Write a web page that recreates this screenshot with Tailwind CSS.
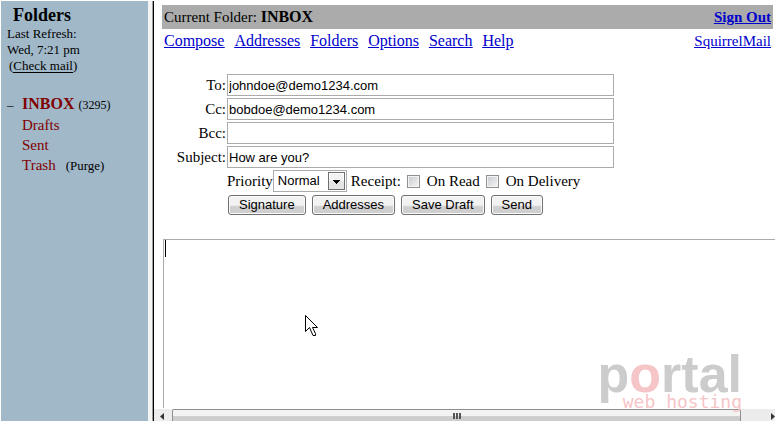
<!DOCTYPE html>
<html lang="en">
<head>
<meta charset="utf-8">
<title>SquirrelMail - Compose</title>
<script src="https://cdn.jsdelivr.net/npm/@tailwindcss/browser@4"></script>
</head>
<body class="flex min-h-screen overflow-hidden bg-white pt-px pl-px text-[15px] leading-5 text-black font-['Liberation_Serif',serif]">
<aside class="mb-px w-[147px] shrink-0 bg-[#a0b8c8] px-[6px] pt-1">
  <h1 class="pl-[6px] text-[18px] leading-5 font-bold">Folders</h1>
  <div class="pt-px text-[13px] leading-4">
    <p>Last Refresh:</p>
    <p>Wed, 7:21 pm</p>
    <p class="pl-[2px]">(<a href="#" class="inline-block h-[15px] border-b border-black leading-4">Check mail</a>)</p>
  </div>
  <nav class="mt-5 text-[#800000]">
    <ul>
      <li class="flex items-baseline"><button class="w-[15px] text-left text-[13px] text-black" aria-label="Collapse INBOX">–</button><a href="#" class="text-[16px] font-bold">INBOX</a><span class="ml-1 text-[12px] text-black">(3295)</span></li>
      <li class="pl-[15px]"><a href="#">Drafts</a></li>
      <li class="pl-[15px]"><a href="#">Sent</a></li>
      <li class="flex items-baseline pl-[15px]"><a href="#">Trash</a><span class="ml-[10px] text-[13px] text-black">(<a href="#">Purge</a>)</span></li>
    </ul>
  </nav>
</aside>
<div class="mb-px flex w-[6px] shrink-0 border-r border-black bg-[#f4f4f4]"><div class="ml-auto w-px bg-[#a0a0a0]"></div></div>
<main class="relative flex min-w-0 flex-1 flex-col pt-1">
  <header class="mr-[3px] ml-2">
    <div class="flex h-6 items-center justify-between bg-[#ababab] px-[2px]">
      <p>Current Folder: <b class="text-[16px]">INBOX</b></p>
      <a href="#" class="font-bold text-[#0000cc] underline">Sign Out</a>
    </div>
    <nav class="flex h-6 items-center gap-[10px] px-[2px] text-[16px] text-[#0000cc] underline">
      <a href="#">Compose</a>
      <a href="#">Addresses</a>
      <a href="#">Folders</a>
      <a href="#">Options</a>
      <a href="#">Search</a>
      <a href="#">Help</a>
      <a href="#" class="ml-auto text-[15px]">SquirrelMail</a>
    </nav>
  </header>
  <form class="flex flex-1 flex-col pt-[21px]">
    <div class="grid grid-cols-[72px_minmax(0,387px)] items-center gap-x-px gap-y-[2px] [&>label]:text-right">
      <label for="to">To:</label>
      <input id="to" value="johndoe@demo1234.com" class="h-[22px] border border-[#ababab] px-px text-[13px] font-['Liberation_Sans',sans-serif]">
      <label for="cc">Cc:</label>
      <input id="cc" value="bobdoe@demo1234.com" class="h-[22px] border border-[#ababab] px-px text-[13px] font-['Liberation_Sans',sans-serif]">
      <label for="bcc">Bcc:</label>
      <input id="bcc" class="h-[22px] border border-[#ababab] px-px text-[13px] font-['Liberation_Sans',sans-serif]">
      <label for="subject">Subject:</label>
      <input id="subject" value="How are you?" class="h-[22px] border border-[#ababab] px-px text-[13px] font-['Liberation_Sans',sans-serif]">
      <div class="col-start-2 flex h-[22px] items-center whitespace-nowrap">
        <label for="priority">Priority</label>
        <div class="relative">
          <select id="priority" class="block h-[22px] w-[74px] appearance-none border border-[#ababab] bg-white pl-1 text-[13px] font-['Liberation_Sans',sans-serif]"><option>Normal</option></select>
          <svg class="pointer-events-none absolute top-[2px] right-[2px]" width="17" height="18" viewBox="0 0 17 18" aria-hidden="true">
            <rect x=".5" y=".5" width="16" height="17" fill="#e4e4e4" stroke="#707070"/><path d="M1.500 9V1.500H15.500V9" fill="#f2f2f2" stroke="#fff"/><path d="M5 8h7v1h-1v1h-1v1H9v1H8v-1H7v-1H6V9H5z"/>
          </svg>
        </div>
        <span class="ml-1 w-14">Receipt:</span>
        <input id="read" type="checkbox" class="size-[13px] appearance-none border border-[#8e8f8f] bg-linear-to-br from-[#c6cbd0] to-[#f6f6f6] shadow-[inset_0_0_0_1px_#f4f4f4] checked:bg-[#4b6983]">
        <label for="read" class="ml-[7px]">On Read</label>
        <input id="delivery" type="checkbox" class="ml-[6px] size-[13px] appearance-none border border-[#8e8f8f] bg-linear-to-br from-[#c6cbd0] to-[#f6f6f6] shadow-[inset_0_0_0_1px_#f4f4f4] checked:bg-[#4b6983]">
        <label for="delivery" class="ml-[7px]">On Delivery</label>
      </div>
      <div class="col-start-2 flex gap-[6px] pt-px pl-px text-[13px] font-['Liberation_Sans',sans-serif] [&>button]:h-5 [&>button]:rounded-[3px] [&>button]:border [&>button]:border-[#707070] [&>button]:bg-linear-to-b [&>button]:from-[#f2f2f2] [&>button]:from-50% [&>button]:to-[#cfcfcf] [&>button]:to-60% [&>button]:px-[10px] [&>button]:leading-[18px] [&>button]:shadow-[inset_0_0_0_1px_#fafafa]">
        <button type="button">Signature</button>
        <button type="button">Addresses</button>
        <button type="button">Save Draft</button>
        <button type="submit">Send</button>
      </div>
    </div>
    <div class="relative mt-6 mr-px ml-[9px] flex flex-1">
      <textarea aria-label="Message body" class="block w-full flex-1 resize-none border-t border-l border-[#ababab] p-1 text-[13px] font-['Liberation_Mono',monospace]"></textarea>
      <div class="absolute top-[1px] left-[2px] h-[17px] w-px bg-black"></div>
    </div>
  </form>
  <svg class="absolute top-[314px] left-[151px]" width="13" height="22" viewBox="0 0 13 22" aria-hidden="true">
    <path d="M.5 .5V16.500L4.500 12.500L8 20.500H10.500V18.500L7.500 12.500H12.500Z" fill="#fff" stroke="#000"/>
  </svg>
  <div class="pointer-events-none absolute right-[34px] bottom-[12px] z-10 flex flex-col items-end whitespace-nowrap">
    <div class="text-[52px] leading-10 font-bold text-[#cccccc] font-['Liberation_Sans',sans-serif]">p<span class="text-[#f5c5c8]">o</span>rtal</div>
    <div class="text-[18px] leading-4 text-[#f5c5c8] font-['DejaVu_Sans_Mono',monospace]">web hosting</div>
  </div>
  <div class="mt-px mr-px mb-px flex h-3 bg-[#ececec]" aria-hidden="true">
    <svg width="18" height="12" viewBox="0 0 18 12"><path d="M10 4v7L6 7.500z" fill="#333"/></svg>
    <div class="flex flex-1 justify-center gap-px rounded-t-[2px] border-x border-t border-[#8e8e8e] bg-linear-to-b from-[#f3f3f3] from-50% to-[#cdcdcd] to-60% pt-[3px]">
      <i class="h-[6px] w-[2px] bg-[#555]"></i><i class="h-[6px] w-[2px] bg-[#555]"></i><i class="h-[6px] w-[2px] bg-[#555]"></i>
    </div>
    <svg width="34" height="12" viewBox="0 0 34 12"><path d="M30 4v7l4-3.500z" fill="#333"/></svg>
  </div>
</main>
</body>
</html>
